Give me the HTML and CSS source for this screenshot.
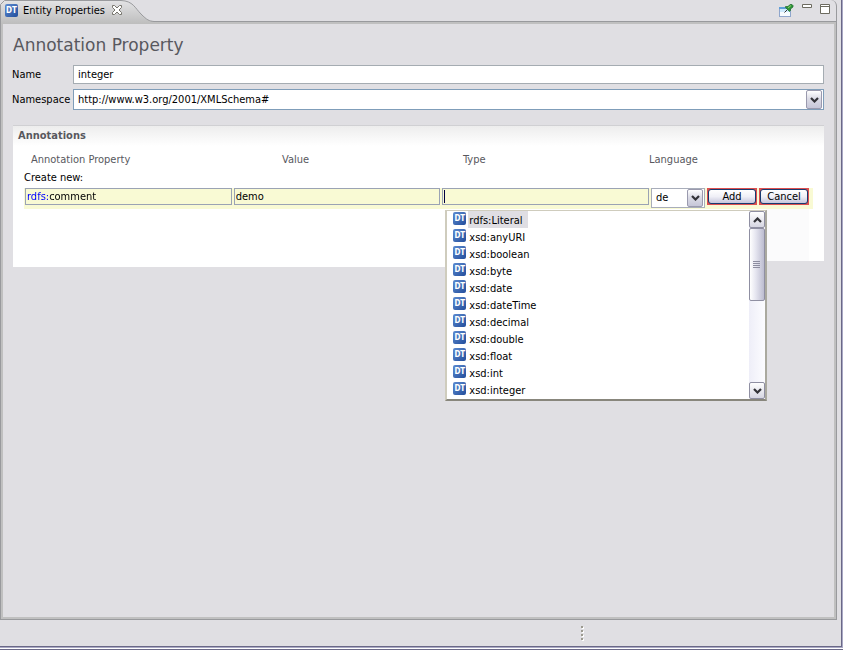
FILE: index.html
```html
<!DOCTYPE html>
<html lang="en">
<head>
<meta charset="utf-8">
<title>Entity Properties</title>
<link rel="stylesheet" href="styles.css">
</head>
<body>
<svg class="defs" width="0" height="0" aria-hidden="true">
  <symbol id="chevron" viewBox="0 0 9 6"><path d="M1 1l3.5 3.5L8 1" fill="none" stroke="#333338" stroke-width="2.2"/></symbol>
</svg>
<div class="window">
  <main class="view">
    <header class="tabbar">
      <svg class="tab-shape" width="160" height="24" viewBox="0 0 160 24" aria-hidden="true">
        <defs><linearGradient id="tabfill" x1="0" y1="0" x2="0" y2="1"><stop offset="0" stop-color="#e4e4e6"/><stop offset="1" stop-color="#bdbdbd"/></linearGradient></defs>
        <path d="M0 24V4L4 0H121C133 1 135 8 141 14S149 21 154 21.500H160V24Z" fill="url(#tabfill)"/>
        <path d="M.5 24V4.500L4.500 .5H121C133 1 135 8 141 14S149 21 154 21.500H160" fill="none" stroke="#999a9d"/>
      </svg>
      <span class="dt">DT</span>
      <span class="tab-title">Entity Properties</span>
      <button class="tool close" aria-label="Close"><svg width="12" height="12" viewBox="0 0 12 12"><path d="M1.500 1.500h2L6 4l2.500-2.500h2v2L8 6l2.500 2.500v2h-2L6 8l-2.500 2.500h-2v-2L4 6 1.500 3.500z" fill="#fff" stroke="#77756d"/></svg></button>
      <div class="tools">
        <button class="tool" aria-label="Pin view"><svg width="16" height="16" viewBox="0 0 16 16"><rect x="1.500" y="4.500" width="11" height="9" fill="#f6fcff" stroke="#8fa6cc"/><path d="M1 4h10v2H1z" fill="#5f9fd8"/><path d="M2 6h10v3H2z" fill="#cdeafc"/><path d="M6.500 9.500l3-3" stroke="#333"/><path d="M7.500 3.500h2.500l2-2h2l1 1v1.500l-2.500 2v1.500l-1 1-4-4z" fill="#2f9438" stroke="#1c6a2c" stroke-width=".7"/><path d="M10 5l3-2.500" stroke="#8fd46b"/></svg></button>
        <button class="tool" aria-label="Minimize"><svg width="10" height="16" viewBox="0 0 10 16"><path d="M.5 3.500h9v3h-9z" fill="#fff" stroke="#6d6b60"/></svg></button>
        <button class="tool" aria-label="Maximize"><svg width="10" height="16" viewBox="0 0 10 16"><path d="M.5 3.500h9v9h-9zM0 5.500h10" fill="#fff" stroke="#6d6b60"/></svg></button>
      </div>
    </header>
    <div class="content">
      <h1>Annotation Property</h1>
      <div class="form">
        <label for="name">Name</label>
        <input id="name" class="field name" type="text" value="integer">
        <label for="ns">Namespace</label>
        <div class="combo ns">
          <select id="ns"><option>http://www.w3.org/2001/XMLSchema#</option></select>
          <span class="drop"><svg width="9" height="6"><use href="#chevron"/></svg></span>
        </div>
      </div>
      <section class="annotations">
        <h2>Annotations</h2>
        <div class="heads">
          <label for="prop">Annotation Property</label>
          <label for="value">Value</label>
          <label for="type">Type</label>
          <label for="lang">Language</label>
        </div>
        <p>Create new:</p>
        <div class="row">
          <div class="cell"><input id="prop" class="prefixed" type="text" value="rdfs:comment"></div>
          <div class="cell"><input id="value" type="text" value="demo"></div>
          <div class="cell active"><input id="type" type="text" value="">
            <div class="popup">
              <ul role="listbox" aria-label="Type">
                <li role="option" aria-selected="true"><span class="dt">DT</span><span class="text">rdfs:Literal</span></li>
                <li role="option"><span class="dt">DT</span><span class="text">xsd:anyURI</span></li>
                <li role="option"><span class="dt">DT</span><span class="text">xsd:boolean</span></li>
                <li role="option"><span class="dt">DT</span><span class="text">xsd:byte</span></li>
                <li role="option"><span class="dt">DT</span><span class="text">xsd:date</span></li>
                <li role="option"><span class="dt">DT</span><span class="text">xsd:dateTime</span></li>
                <li role="option"><span class="dt">DT</span><span class="text">xsd:decimal</span></li>
                <li role="option"><span class="dt">DT</span><span class="text">xsd:double</span></li>
                <li role="option"><span class="dt">DT</span><span class="text">xsd:float</span></li>
                <li role="option"><span class="dt">DT</span><span class="text">xsd:int</span></li>
                <li role="option"><span class="dt">DT</span><span class="text">xsd:integer</span></li>
              </ul>
              <div class="scroll">
                <button class="arrow" aria-label="Scroll up"><svg class="up" width="9" height="6"><use href="#chevron"/></svg></button>
                <div class="thumb"><svg width="8" height="8" viewBox="0 0 8 8"><path d="M0 .5h7M0 2.500h7M0 4.500h7M0 6.500h7" stroke="#8d8da0"/></svg></div>
                <button class="arrow" aria-label="Scroll down"><svg width="9" height="6"><use href="#chevron"/></svg></button>
              </div>
            </div>
          </div>
          <div class="combo lang">
            <select id="lang"><option>de</option></select>
            <span class="drop"><svg width="9" height="6"><use href="#chevron"/></svg></span>
          </div>
          <button class="push"><span>Add</span></button>
          <button class="push"><span>Cancel</span></button>
        </div>
      </section>
    </div>
  </main>
  <footer class="status"><i></i><i></i><i></i><i></i></footer>
</div>
</body>
</html>
```
FILE: styles.css
```css
* { box-sizing: border-box; }
body {
  margin: 0;
  height: 100vh;
  overflow: hidden;
  background: #e0dfe3;
  color: #000;
  font: 11px/14px "DejaVu Sans Condensed", "Noto Sans", sans-serif;
  border-bottom: 1px solid #6a6887;
}
input, select, button { font: inherit; color: inherit; margin: 0; border-radius: 0; outline: 0; }
h1, h2, p, ul { margin: 0; padding: 0; font-weight: normal; }
.defs { position: absolute; }
.window {
  height: calc(100% - 1px);
  display: flex;
  flex-direction: column;
  border-right: 1px solid #a9a8c4;
  border-bottom: 1px solid #a9a8c4;
  box-shadow: inset -1px -1px #6a6887, 0 1px #fff;
  padding: 0 1px 1px 0;
}
.view { flex: 1; display: flex; flex-direction: column; margin-right: 4px; }
.tabbar {
  position: relative;
  flex: none;
  height: 24px;
  display: flex;
  align-items: flex-start;
  padding: 4px 6px 0 5px;
  background: linear-gradient(#e0dfe3 0 21px, #999a9d 21px 22px, #c0c0c0 22px);
  border-right: 1px solid #999a9d;
  border-top-right-radius: 6px;
}
.tab-shape { position: absolute; left: 0; top: 0; }
.dt {
  position: relative;
  flex: none;
  width: 13px;
  height: 13px;
  border-radius: 2px;
  background: linear-gradient(135deg, #5d8bd0, #234e9c);
  color: #fff;
  font: bold 8px/13px "DejaVu Sans Condensed", sans-serif;
  text-align: center;
}
.tab-title { position: relative; margin-left: 5px; }
.tool { position: relative; border: 0; padding: 0; background: none; display: block; }
.tool svg { display: block; }
.close { margin-left: 6px; }
.tools { display: flex; gap: 8px; margin: -1px 0 0 auto; }
.tools .tool:not(:first-child) { margin-top: -4px; }
.content {
  flex: 1;
  border: solid #999a9d;
  border-width: 0 1px 1px;
  box-shadow: inset 2px 0 #c0c0c0, inset -2px -2px #c0c0c0;
  padding: 11px 12px 0 11px;
  background: #e0dfe3;
}
h1 { font: 17px/20px "DejaVu Sans", sans-serif; color: #58585e; margin: 0 0 10px 1px; }
.form {
  display: grid;
  grid-template-columns: 61px 1fr;
  row-gap: 5px;
  align-items: center;
}
.field { height: 19px; width: 100%; border: 1px solid #a5acb2; padding: 0 4px; background: #fff; }
.combo { position: relative; border: 1px solid #7f9db9; background: #fff; display: flex; }
.combo select { flex: 1; width: 100%; appearance: none; border: 0; background: none; padding: 0 18px 0 4px; }
.drop {
  position: absolute;
  right: 1px;
  top: 0;
  bottom: 0;
  width: 16px;
  border: 1px solid #9a9aae;
  border-radius: 2px;
  background: linear-gradient(#fff, #dcdce6 45%, #c6c6d8);
  display: grid;
  place-items: center;
  pointer-events: none;
}
.ns { height: 21px; }
.annotations {
  margin: 15px 0 0 1px;
  height: 142px;
  padding: 3px 11px 0;
  border-top: 1px solid #d0d0d3;
  background:
    linear-gradient(#e0dfe3, #e0dfe3) right bottom / 58px 6px no-repeat,
    linear-gradient(#fbfbfc, #fbfbfc) right 15px bottom 6px / 43px 53px no-repeat,
    linear-gradient(#ededed, #fff 20px);
}
h2 { font-size: 11px; font-weight: bold; color: #58585e; margin-left: -6px; }
.heads {
  display: grid;
  grid-template-columns: 251fr 181fr 186fr 164fr;
  margin: 10px 0 4px 7px;
  color: #58585e;
}
.row {
  display: grid;
  grid-template-columns: repeat(3, 1fr) 54px 50px 50px;
  column-gap: 2px;
  align-items: start;
  height: 21px;
  margin-top: 3px;
  padding: 0 4px 0 1px;
  background: #f9fad4;
}
.cell { position: relative; height: 17px; border: 1px solid #9ba3b4; background: #f9fad4; }
.cell input { display: block; width: 100%; height: 15px; border: 0; padding: 0 1px; background: transparent; }
.cell .prefixed {
  color: transparent;
  background: linear-gradient(90deg, #00f 23px, #000 23px);
  -webkit-background-clip: text;
  background-clip: text;
}
.active::before { content: ""; position: absolute; left: 1px; top: 1px; width: 1px; height: 13px; background: #000040; }
.lang { height: 20px; border-color: #a8adba; }
.push { height: 17px; padding: 1px; border: 0; background: #dc5050; }
.push span {
  display: block;
  height: 15px;
  line-height: 13px;
  border: 1px solid #173a70;
  border-radius: 3px;
  background: linear-gradient(#fff, #f0f0f7 50%, #c6c6dc);
}
.popup {
  position: absolute;
  z-index: 2;
  left: 2px;
  top: 21px;
  width: 322px;
  display: flex;
  border: 1px solid #cfccbd;
  border-width: 1px 2px 2px 2px;
  border-bottom-color: #88867c;
  border-right-color: #aaa99f;
  background: #fff;
}
.popup ul { flex: 1; list-style: none; padding: 0 0 1px 6px; }
.popup li { display: flex; height: 17px; align-items: flex-start; padding-top: 1px; }
.popup .text { margin: -1px 0 0 2px; padding: 2px 5px 1px 1px; height: 17px; line-height: 15px; }
.popup li[aria-selected] .text { background: #dfdee3; }
.scroll { width: 16px; display: flex; flex-direction: column; background: linear-gradient(90deg, #eeeef8, #fcfcff); }
.arrow, .thumb {
  width: 16px;
  height: 17px;
  padding: 0;
  border: 1px solid #8f8fa2;
  border-radius: 2px;
  background: linear-gradient(#fff, #d6d6e2);
  display: grid;
  place-items: center;
}
.thumb { height: 73px; margin-bottom: auto; background: linear-gradient(90deg, #fff, #e6e6f0 40%, #bcbcd0); }
.up { transform: rotate(180deg); }
.status { flex: none; height: 26px; padding: 6px 0 0 calc(69% + 1px); }
.status i { display: block; width: 2px; height: 2px; margin-bottom: 2px; background: #9c9a90; box-shadow: 1px 1px #fff; }
```
